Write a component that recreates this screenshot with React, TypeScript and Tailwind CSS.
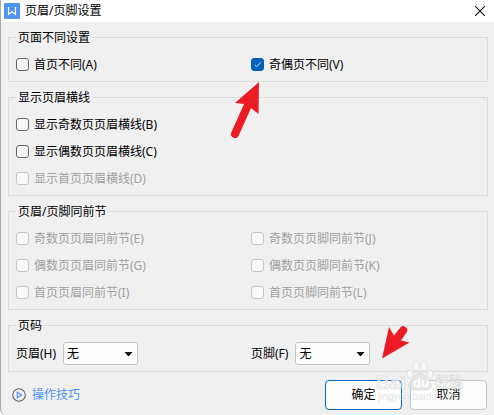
import type { ReactNode } from "react";

function Group({ title, children, className = "pt-[5px] pb-[3px]" }: { title: string; children: ReactNode; className?: string }) {
  return (
    <fieldset className={`min-w-0 border border-[#dcdcdc] pr-[7px] pl-[7px] ${className}`}>
      <legend className="px-0.5 leading-[17px]">{title}</legend>
      {children}
    </fieldset>
  );
}

function Check({ label, checked = false, disabled = false }: { label: string; checked?: boolean; disabled?: boolean }) {
  return (
    <label className={`flex h-[27px] items-center gap-[5px] ${disabled ? "text-[#a0a0a0]" : "text-black"}`}>
      <span className="grid">
        <input
          type="checkbox"
          defaultChecked={checked}
          disabled={disabled}
          className="peer col-start-1 row-start-1 size-[13px] appearance-none rounded-[3px] border border-[#666666] bg-[#f7f7f7] checked:border-[#005fb8] checked:bg-[#005fb8] disabled:border-[#c5c5c5] disabled:bg-[#f9f9f9]"
        />
        <svg
          viewBox="0 0 13 13"
          className="pointer-events-none invisible col-start-1 row-start-1 size-[13px] peer-checked:visible"
          fill="none"
          stroke="#d5e6f7"
          strokeWidth="1"
        >
          <path d="M3.5 6.7 5.5 8.7 9.8 4.4" />
        </svg>
      </span>
      {label}
    </label>
  );
}

function Picker({ id, label }: { id: string; label: string }) {
  return (
    <div className="flex items-center gap-[7px]">
      <label htmlFor={id} className="shrink-0 whitespace-nowrap">
        {label}
      </label>
      <span className="grid w-[75px] items-center">
        <select
          id={id}
          className="col-start-1 row-start-1 h-[23px] w-full appearance-none rounded-[3px] border border-[#c4c4c4] bg-[#fdfdfd] px-[3px] leading-[21px]"
        >
          <option>无</option>
        </select>
        <svg viewBox="0 0 7 4" className="pointer-events-none col-start-1 row-start-1 mr-[6px] h-[4px] w-[7px] justify-self-end">
          <path d="M0 0h7v.5L4 4H3L0 .5z" fill="#000" />
        </svg>
      </span>
    </div>
  );
}

function Watermark() {
  return (
    <svg viewBox="0 0 100 50" className="pointer-events-none absolute right-[24px] bottom-[5px] h-[50px] w-[100px]" aria-hidden="true">
      <g fill="#fafafa" stroke="#cfcfcf" strokeWidth="0.6" opacity="0.8">
        <text x="6" y="29" fontSize="19" fontWeight="bold" fontFamily="Liberation Sans, sans-serif">Bai</text>
        <text x="65" y="27" fontSize="14" fontWeight="bold" fontFamily="Noto Sans CJK SC, sans-serif">经验</text>
        <ellipse cx="40" cy="14" rx="3" ry="4" />
        <ellipse cx="46" cy="6" rx="3" ry="4.5" />
        <ellipse cx="54" cy="6" rx="3" ry="4.5" />
        <ellipse cx="60" cy="14" rx="3" ry="4" />
        <path d="M50 13c-5 0-6 5-9 8-4 4-3 9 2 9h14c5 0 6-5 2-9-3-3-4-8-9-8z" fill="#e4e4e4" />
      </g>
      <text x="43" y="27" fontSize="13" fontWeight="bold" fill="#fff" fontFamily="Liberation Sans, sans-serif">du</text>
      <text x="8" y="40" fontSize="10" fill="#dedede" opacity="0.7" fontFamily="Liberation Sans, sans-serif">jingyan.baidu.com</text>
    </svg>
  );
}

export default function App() {
  return (
    <main className="relative flex min-h-screen flex-col rounded-bl-[6px] border-l border-[#a8a8a8] bg-[#f0f0f0] font-['Noto_Sans','Noto_Sans_CJK_SC',sans-serif] text-xs text-black">
      <header className="flex h-[22px] items-center bg-white pr-[9px] pl-[3px]">
        <svg viewBox="0 0 16 16" className="size-4" aria-hidden="true">
          <rect width="16" height="16" rx="1" fill="#4e95f5" />
          <path d="M4.500 4v7.500L8 8.500l3.500 3V4" fill="none" stroke="#fff" strokeWidth="1.2" />
        </svg>
        <h1 className="ml-[5px] flex-1 leading-4">页眉/页脚设置</h1>
        <button type="button" aria-label="关闭">
          <svg viewBox="0 0 10 10" className="size-[10px]" stroke="#111" strokeWidth="1.1">
            <path d="M0 0l10 10M10 0L0 10" />
          </svg>
        </button>
      </header>

      <div className="flex flex-col gap-[7px] pt-[7px] pr-[6px] pl-[7px]">
        <Group title="页面不同设置">
          <div className="grid grid-cols-2 gap-x-1.5">
            <Check label="首页不同(A)" />
            <Check label="奇偶页不同(V)" checked />
          </div>
        </Group>
        <Group title="显示页眉横线">
          <Check label="显示奇数页页眉横线(B)" />
          <Check label="显示偶数页页眉横线(C)" />
          <Check label="显示首页页眉横线(D)" disabled />
        </Group>
        <Group title="页眉/页脚同前节">
          <div className="grid grid-cols-2 gap-x-1.5">
            <Check label="奇数页页眉同前节(E)" disabled />
            <Check label="奇数页页脚同前节(J)" disabled />
            <Check label="偶数页页眉同前节(G)" disabled />
            <Check label="偶数页页脚同前节(K)" disabled />
            <Check label="首页页眉同前节(I)" disabled />
            <Check label="首页页脚同前节(L)" disabled />
          </div>
        </Group>
        <Group title="页码" className="pt-[8px] pb-[6px]">
          <div className="grid grid-cols-2 gap-x-1.5">
            <Picker id="header-number" label="页眉(H)" />
            <Picker id="footer-number" label="页脚(F)" />
          </div>
        </Group>
      </div>

      <footer className="flex items-center gap-2 pt-2 pr-[7px] pb-[5px] pl-[11px]">
        <a href="#tips" className="mr-auto flex items-center gap-[6px] text-[#4a90f5]">
          <svg viewBox="0 0 14 14" className="size-[14px]" fill="none" aria-hidden="true">
            <circle cx="7" cy="7" r="6.3" stroke="#666" strokeWidth="1.1" />
            <path d="M5.3 4.2v5.6L9.7 7z" stroke="#4a90f5" strokeWidth="1.1" />
          </svg>
          操作技巧
        </a>
        <button type="submit" className="h-[30px] w-[77px] rounded border border-[#0067c0] bg-[#fdfdfd]">
          确定
        </button>
        <button type="button" className="h-[30px] w-[77px] rounded border border-[#c4c4c4] bg-[#fdfdfd]">
          取消
        </button>
      </footer>

      <svg viewBox="0 0 30 60" className="pointer-events-none absolute top-[81px] left-[229px] h-[60px] w-[30px]" aria-hidden="true">
        <path d="M29 1 5 22 14 23 1.500 51a3.900 3.900 0 0 0 7 4L21 27l7.500 6z" fill="#ed1c24" />
      </svg>
      <svg viewBox="0 0 30 34" className="pointer-events-none absolute top-[325px] right-[83px] h-[34px] w-[30px]" aria-hidden="true">
        <path d="M1 33.500 8 2l5 8.500L19 3a3.900 3.900 0 0 1 6.500 4.500L20 15.500l8.500 2z" fill="#ed1c24" />
      </svg>
      <Watermark />
    </main>
  );
}
